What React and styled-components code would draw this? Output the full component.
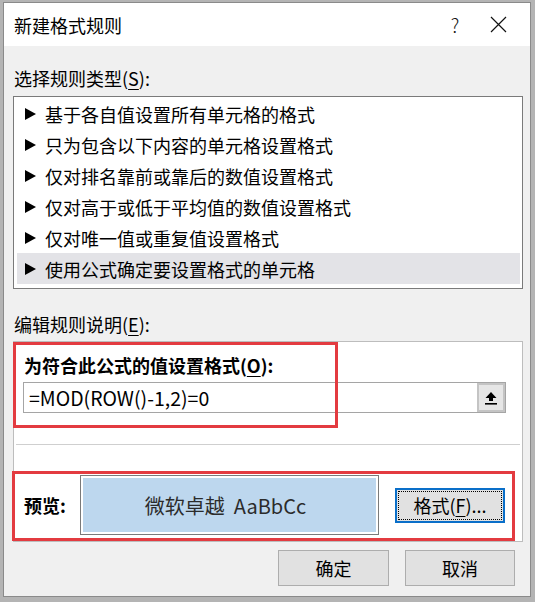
import React from "react";
import styled, { createGlobalStyle } from "styled-components";

const GlobalStyle = createGlobalStyle`
  html, body {
    margin: 0;
    padding: 0;
    background: #b4b4b4;
  }
  * {
    box-sizing: border-box;
  }
  body {
    font-family: "Noto Sans CJK SC", "Noto Sans", sans-serif;
    font-size: 18px;
    color: #000;
  }
`;

const Dialog = styled.div`
  margin: 2px 0 0 3px;
  width: 528px;
  height: 595px;
  border: 1px solid #8a8a8a;
  background: #f0f0f0;
  display: flex;
  flex-direction: column;
`;

const TitleBar = styled.div`
  height: 43px;
  background: #fff;
  display: flex;
  align-items: center;
  padding-left: 10px;
`;

const Title = styled.div`
  flex: 1;
  font-size: 18px;
  line-height: 24px;
`;

const TitleButton = styled.div`
  width: ${(p) => p.w}px;
  display: flex;
  justify-content: center;
  align-items: center;
  font-size: 19px;
  font-weight: 300;
  color: #111;
`;

const Body = styled.div`
  flex: 1;
  display: flex;
  flex-direction: column;
  padding: 20px 7px 10px 9px;
`;

const Label = styled.div`
  line-height: 24px;
  margin-left: 1px;
  margin-top: ${(p) => p.mt || 0}px;
`;

const U = styled.span`
  text-decoration: underline;
  text-underline-offset: 3px;
  text-decoration-thickness: 1px;
`;

const RuleList = styled.div`
  margin-top: 6px;
  background: #fff;
  border: 1px solid #7a7a7a;
  padding: 1px 2px 4px 3px;
`;

const RuleRow = styled.div`
  height: 31px;
  display: flex;
  align-items: center;
  padding-left: 8px;
  background: ${(p) => (p.selected ? "#e3e3e7" : "transparent")};
  line-height: 24px;
`;

const Arrow = styled.span`
  width: 0;
  height: 0;
  border-top: 6px solid transparent;
  border-bottom: 6px solid transparent;
  border-left: 11px solid #000;
  margin-right: 9px;
`;

const Panel = styled.div`
  position: relative;
  margin-top: 5px;
  height: 201px;
  background: #fff;
  border: 1px solid #bdbdbd;
  padding: 11px 16px 0 9px;
`;

const BoldLabel = styled.div`
  font-weight: 700;
  line-height: 24px;
  margin-left: 1px;
`;

const FormulaBox = styled.div`
  margin-top: 5px;
  height: 31px;
  border: 1px solid #a5a5a5;
  display: flex;
  align-items: center;
`;

const FormulaText = styled.div`
  flex: 1;
  padding-left: 5px;
  font-size: 19.5px;
  line-height: 24px;
`;

const CollapseButton = styled.div`
  width: 28px;
  height: 29px;
  background: #e6e6e6;
  border: 2px solid #c4c4c4;
  display: flex;
  align-items: center;
  justify-content: center;
`;

const Separator = styled.div`
  height: 1px;
  background: #cfcfcf;
  margin: 31px -14px 0 -7px;
`;

const PreviewRow = styled.div`
  margin-top: 30px;
  display: flex;
  align-items: center;
`;

const PreviewLabel = styled.div`
  font-weight: 700;
  width: 56px;
  margin-left: 1px;
`;

const PreviewBox = styled.div`
  width: 299px;
  height: 60px;
  border: 1px solid #7a7a7a;
  padding: 2px;
  background: #fff;
`;

const PreviewFill = styled.div`
  height: 100%;
  background: #bdd7ee;
  display: flex;
  align-items: center;
  justify-content: center;
  color: #2b2b2b;
  font-size: 20px;
  white-space: pre;
  padding-right: 8px;
`;

const Button = styled.div`
  width: ${(p) => p.w}px;
  height: ${(p) => p.h}px;
  background: #e1e1e1;
  border: ${(p) => (p.focused ? "2px solid #0a6fc9" : "1px solid #adadad")};
  display: flex;
  align-items: center;
  justify-content: center;
  font-size: 18px;
  line-height: 24px;
  position: relative;
  margin-left: ${(p) => p.ml || 0}px;
`;

const FocusRing = styled.div`
  position: absolute;
  inset: 1px;
  border: 1px dotted #000;
  pointer-events: none;
`;

const Highlight = styled.div`
  position: absolute;
  border: 3px solid #e33b40;
  pointer-events: none;
`;

const Footer = styled.div`
  margin-top: 8px;
  display: flex;
  justify-content: flex-end;
  gap: 16px;
  padding-right: 8px;
`;

const rules = [
  "基于各自值设置所有单元格的格式",
  "只为包含以下内容的单元格设置格式",
  "仅对排名靠前或靠后的数值设置格式",
  "仅对高于或低于平均值的数值设置格式",
  "仅对唯一值或重复值设置格式",
  "使用公式确定要设置格式的单元格",
];

function CloseIcon() {
  return (
    <svg width="17" height="17" viewBox="0 0 17 17">
      <path d="M1 1 L16 16 M16 1 L1 16" stroke="#111" strokeWidth="1.2" fill="none" />
    </svg>
  );
}

function UpIcon() {
  return (
    <svg width="14" height="14" viewBox="0 0 14 14">
      <path d="M7 1 L12.5 7 L9 7 L9 10 L5 10 L5 7 L1.5 7 Z" fill="#000" />
      <rect x="1" y="12" width="12" height="1.6" fill="#000" />
    </svg>
  );
}

export default function App() {
  return (
    <>
      <GlobalStyle />
      <Dialog>
        <TitleBar>
          <Title>新建格式规则</Title>
          <TitleButton w={40}>?</TitleButton>
          <TitleButton w={46} style={{ marginRight: 9 }}>
            <CloseIcon />
          </TitleButton>
        </TitleBar>
        <Body>
          <Label>
            选择规则类型(<U>S</U>):
          </Label>
          <RuleList>
            {rules.map((r, i) => (
              <RuleRow key={r} selected={i === rules.length - 1}>
                <Arrow />
                {r}
              </RuleRow>
            ))}
          </RuleList>
          <Label mt={23}>
            编辑规则说明(<U>E</U>):
          </Label>
          <Panel>
            <BoldLabel>
              为符合此公式的值设置格式(<U>O</U>):
            </BoldLabel>
            <FormulaBox>
              <FormulaText>=MOD(ROW()-1,2)=0</FormulaText>
              <CollapseButton>
                <UpIcon />
              </CollapseButton>
            </FormulaBox>
            <Separator />
            <PreviewRow>
              <PreviewLabel>预览:</PreviewLabel>
              <PreviewBox>
                <PreviewFill>{"微软卓越  AaBbCc"}</PreviewFill>
              </PreviewBox>
              <Button w={110} h={35} focused ml={16}>
                <FocusRing />
                格式(<U>F</U>)...
              </Button>
            </PreviewRow>
            <Highlight style={{ left: -1, top: 0, width: 325, height: 86 }} />
            <Highlight style={{ left: -2, top: 129, width: 503, height: 70 }} />
          </Panel>
          <Footer>
            <Button w={111} h={36}>确定</Button>
            <Button w={110} h={36}>取消</Button>
          </Footer>
        </Body>
      </Dialog>
    </>
  );
}
